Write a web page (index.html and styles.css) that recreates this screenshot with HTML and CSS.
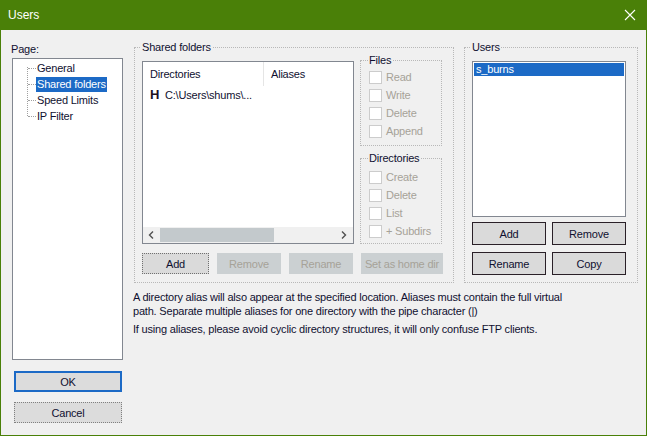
FILE: index.html
```html
<!DOCTYPE html>
<html>
<head>
<meta charset="utf-8">
<link rel="stylesheet" href="styles.css">
</head>
<body>
<div class="window">
  <div class="titlebar">
    <span class="title">Users</span>
    <svg class="close" width="12" height="12" viewBox="0 0 12 12"><path d="M1 1L11 11M11 1L1 11" stroke="#fff" stroke-width="1.1" fill="none"/></svg>
  </div>
  <div class="body">
    <div class="leftcol">
      <div class="pagelabel">Page:</div>
      <div class="tree">
        <div class="tree-line"></div>
        <div class="tree-item"><span class="branch"></span><span class="ti">General</span></div>
        <div class="tree-item"><span class="branch"></span><span class="ti sel">Shared folders</span></div>
        <div class="tree-item"><span class="branch"></span><span class="ti">Speed Limits</span></div>
        <div class="tree-item"><span class="branch"></span><span class="ti">IP Filter</span></div>
      </div>
      <div class="dlgbtn ok">OK</div>
      <div class="dlgbtn cancel">Cancel</div>
    </div>
    <div class="maincol">
      <div class="groups">
        <div class="group shared">
          <span class="legend">Shared folders</span>
          <div class="shared-top">
            <div class="listview">
              <div class="lv-header">
                <div class="lv-col c1">Directories</div>
                <div class="lv-col c2">Aliases</div>
              </div>
              <div class="lv-row"><span class="hicon">H</span><span class="path">C:\Users\shums\...</span></div>
              <div class="lv-spacer"></div>
              <div class="hscroll">
                <svg class="arrow" width="7" height="8" viewBox="0 0 7 8"><path d="M5 0.5L1.5 4L5 7.5" stroke="#505050" stroke-width="1.4" fill="none"/></svg>
                <div class="track"><div class="thumb"></div></div>
                <svg class="arrow" width="7" height="8" viewBox="0 0 7 8"><path d="M2 0.5L5.5 4L2 7.5" stroke="#505050" stroke-width="1.4" fill="none"/></svg>
              </div>
            </div>
            <div class="perms">
              <div class="group sub files">
                <span class="legend">Files</span>
                <div class="cb"><span class="box"></span>Read</div>
                <div class="cb"><span class="box"></span>Write</div>
                <div class="cb"><span class="box"></span>Delete</div>
                <div class="cb"><span class="box"></span>Append</div>
              </div>
              <div class="group sub dirs">
                <span class="legend">Directories</span>
                <div class="cb"><span class="box"></span>Create</div>
                <div class="cb"><span class="box"></span>Delete</div>
                <div class="cb"><span class="box"></span>List</div>
                <div class="cb"><span class="box"></span>+ Subdirs</div>
              </div>
            </div>
          </div>
          <div class="shared-buttons">
            <div class="btn focus w-add">Add</div>
            <div class="btn disabled w-rem">Remove</div>
            <div class="btn disabled w-ren">Rename</div>
            <div class="btn disabled w-home">Set as home dir</div>
          </div>
        </div>
        <div class="group users">
          <span class="legend">Users</span>
          <div class="userlist">
            <div class="user sel">s_burns</div>
          </div>
          <div class="ubtns">
            <div class="btn dark">Add</div>
            <div class="btn dark">Remove</div>
            <div class="btn dark">Rename</div>
            <div class="btn dark">Copy</div>
          </div>
        </div>
      </div>
      <p class="note">A directory alias will also appear at the specified location. Aliases must contain the full virtual path. Separate multiple aliases for one directory with the pipe character (|)</p>
      <p class="note second">If using aliases, please avoid cyclic directory structures, it will only confuse FTP clients.</p>
    </div>
  </div>
</div>
</body>
</html>
```
FILE: styles.css
```css
* { box-sizing: border-box; }
html, body { margin: 0; padding: 0; }
body {
  width: 647px; height: 436px; overflow: hidden;
  font-family: "Liberation Sans", Arial, sans-serif;
  font-size: 11px;
  letter-spacing: -0.2px;
  color: #101030;
}
.window {
  width: 647px; height: 436px;
  background: #f0f0f0;
  border: 1px solid #4a8008;
  border-top: none;
  display: flex; flex-direction: column;
}
.titlebar {
  height: 30px; flex: none;
  background: #4a8008;
  margin: 0 -1px;
  display: flex; align-items: center; justify-content: space-between;
  padding: 0 11px 0 8px;
  color: #fff; font-size: 12px; letter-spacing: 0;
}
.close { display: block; }
.body { flex: 1; display: flex; padding-left: 10px; }
.leftcol { width: 113px; flex: none; display: flex; flex-direction: column; }
.pagelabel { height: 14px; line-height: 14px; margin-top: 12px; }
.tree {
  margin-top: 2px; margin-left: 1px; width: 111px; height: 302px;
  background: #fff; border: 1px solid #828790;
  position: relative; padding-top: 1px;
}
.tree-line {
  position: absolute; left: 14px; top: 8px; height: 49px;
  border-left: 1px dotted #a0a0a0;
}
.tree-item { height: 16px; display: flex; align-items: center; }
.branch { width: 8px; margin-left: 15px; border-top: 1px dotted #a0a0a0; margin-right: 0; }
.ti { padding: 0 1px; line-height: 15px; height: 15px; }
.ti.sel { background: #1c6ac6; color: #fff; }
.dlgbtn {
  width: 108px; height: 21px; margin-left: 3px;
  display: flex; align-items: center; justify-content: center;
  background: #dcdcdc; color: #101030;
}
.dlgbtn.ok { margin-top: 11px; border: 2px solid #1c6ac6; }
.dlgbtn.cancel { margin-top: 10px; border: 1px dotted #808080; }

.maincol { margin-left: 10px; width: 504px; display: flex; flex-direction: column; }
.groups { display: flex; margin-top: 17px; gap: 10px; }
.group { border: 1px dotted #b8b8b8; position: relative; }
.legend {
  position: absolute; top: -8px; left: 6px; line-height: 14px;
  background: #f0f0f0; padding: 0 1px; color: #101030;
}
.sub .legend { left: 7px; }
.shared { width: 320px; height: 236px; padding: 13px 0 0 7px; }
.shared-top { display: flex; }
.listview {
  width: 212px; height: 183px; background: #fff; border: 1px solid #828790;
  display: flex; flex-direction: column;
}
.lv-header { height: 24px; display: flex; flex: none; }
.lv-col { line-height: 24px; padding-left: 7px; }
.lv-col.c1 { width: 121px; border-right: 1px solid #e5e5e5; }
.lv-row { height: 17px; display: flex; align-items: center; padding-left: 7px; }
.hicon { font-weight: bold; font-size: 13px; color: #201020; width: 15px; }
.path { color: #101030; }
.lv-spacer { flex: 1; }
.hscroll { height: 16px; flex: none; display: flex; align-items: center; background: #f0f0f0; padding: 0 6px 0 5px; }
.track { flex: 1; height: 16px; padding: 1px 0 1px 5px; margin: 0 6px 0 0; }
.thumb { width: 114px; height: 14px; background: #c3c9cc; }
.perms { margin-left: 6px; display: flex; flex-direction: column; }
.sub { width: 82px; padding-left: 8px; }
.files { margin-top: -1px; height: 86px; padding-top: 7px; }
.dirs { margin-top: 12px; height: 86px; padding-top: 9px; }
.cb { height: 18px; display: flex; align-items: center; color: #a6a298; }
.box { width: 13px; height: 13px; border: 1px solid #cccccc; background: #fff; margin-right: 4px; }

.shared-buttons { display: flex; margin-top: 9px; }
.btn {
  height: 21px; display: flex; align-items: center; justify-content: center;
  background: #dadada; white-space: nowrap;
}
.btn.focus { border: 1px dotted #707070; color: #101030; }
.btn.disabled { background: #cbd0d2; color: #a6a298; }
.w-add { width: 67px; }
.w-rem { width: 64px; margin-left: 8px; }
.w-ren { width: 64px; margin-left: 8px; }
.w-home { width: 82px; margin-left: 8px; }

.users { width: 174px; height: 236px; padding: 13px 0 0 7px; }
.userlist { width: 154px; height: 156px; background: #fff; border: 1px solid #828790; padding: 1px; }
.user { height: 13px; line-height: 13px; padding-left: 2px; }
.user.sel { background: #1c6ac6; color: #fff; }
.ubtns { display: grid; grid-template-columns: 74px 74px; column-gap: 6px; row-gap: 7px; margin-top: 5px; }
.btn.dark { height: 23px; border: 1px solid #2a2028; color: #101030; }

.note { margin: 0; line-height: 14px; width: 440px; margin-left: -1px; }
.note:first-of-type { margin-top: 7px; }
.note.second { margin-top: 4px; }
```
